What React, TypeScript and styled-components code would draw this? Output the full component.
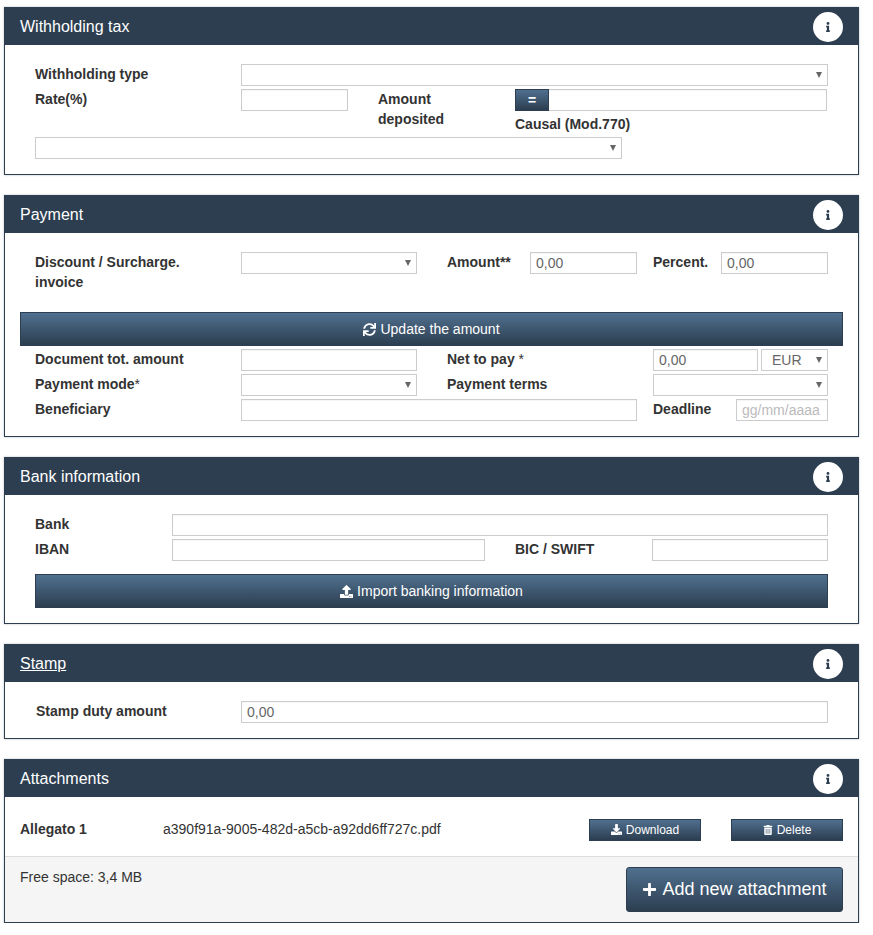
import React from 'react'
import styled, { createGlobalStyle } from 'styled-components'
import { FaDownload, FaInfo, FaPlus, FaSync, FaTrashAlt, FaUpload } from 'react-icons/fa'

const GlobalStyle = createGlobalStyle`
  html, body {
    margin: 0;
    background: #fff;
    font-family: "Liberation Sans", Arial, sans-serif;
    font-size: 14px;
    line-height: 20px;
    color: #333;
  }
`

const Panel: React.FunctionComponent<{ title: string; underline?: boolean; children: React.ReactNode }> = ({
  title,
  underline,
  children,
}) => (
  <PanelBox>
    <PanelHeader>
      <PanelTitle $underline={underline}>{title}</PanelTitle>
      <InfoButton>
        <FaInfo size={10} />
      </InfoButton>
    </PanelHeader>
    {children}
  </PanelBox>
)

const Select: React.FunctionComponent<{ value?: string }> = ({ value }) => (
  <SelectWrap>
    <SelectInput defaultValue={value}>
      {value ? <option>{value}</option> : <option />}
    </SelectInput>
  </SelectWrap>
)

export default function App() {
  return (
    <Page>
      <GlobalStyle />
      <Panel title="Withholding tax">
        <PanelBody>
          <Row $columns="206px 587px">
            <Label>Withholding type</Label>
            <Select />
          </Row>
          <Row $columns="206px 107px 30px 137px 312px">
            <Label>Rate(%)</Label>
            <TextInput />
            <span />
            <Label>Amount deposited</Label>
            <div>
              <InputGroup>
                <GroupButton>=</GroupButton>
                <GroupInput />
              </InputGroup>
              <Causal>Causal (Mod.770)</Causal>
            </div>
          </Row>
          <Row $columns="587px" $overlap={23}>
            <Select />
          </Row>
        </PanelBody>
      </Panel>

      <Panel title="Payment">
        <PanelBody>
          <Row $columns="206px 176px 30px 83px 107px 16px 68px 107px">
            <Label>Discount / Surcharge. invoice</Label>
            <Select />
            <span />
            <Label>Amount**</Label>
            <TextInput defaultValue="0,00" />
            <span />
            <Label>Percent.</Label>
            <TextInput defaultValue="0,00" />
          </Row>
          <WideButton $outset={15} $top={35}>
            <FaSync size={13} /> Update the amount
          </WideButton>
          <Row $columns="206px 176px 30px 206px 105px 3px 67px">
            <Label>Document tot. amount</Label>
            <TextInput />
            <span />
            <Label>Net to pay <Light>*</Light></Label>
            <TextInput defaultValue="0,00" />
            <span />
            <Select value="EUR" />
          </Row>
          <Row $columns="206px 176px 30px 206px 175px">
            <Label>Payment mode<Light>*</Light></Label>
            <Select />
            <span />
            <Label>Payment terms</Label>
            <Select />
          </Row>
          <Row $columns="206px 396px 16px 83px 92px">
            <Label>Beneficiary</Label>
            <TextInput />
            <span />
            <Label>Deadline</Label>
            <TextInput placeholder="gg/mm/aaaa" />
          </Row>
        </PanelBody>
      </Panel>

      <Panel title="Bank information">
        <PanelBody>
          <Row $columns="137px 656px">
            <Label>Bank</Label>
            <TextInput />
          </Row>
          <Row $columns="137px 313px 30px 137px 176px">
            <Label>IBAN</Label>
            <TextInput />
            <span />
            <Label>BIC / SWIFT</Label>
            <TextInput />
          </Row>
          <WideButton $top={10}>
            <FaUpload size={13} /> Import banking information
          </WideButton>
        </PanelBody>
      </Panel>

      <Panel title="Stamp" underline>
        <PanelBody>
          <Row $columns="206px 587px">
            <StampLabel>Stamp duty amount</StampLabel>
            <TextInput defaultValue="0,00" />
          </Row>
        </PanelBody>
      </Panel>

      <Panel title="Attachments">
        <AttachmentRow>
          <AttachmentName>Allegato 1</AttachmentName>
          <FileName>a390f91a-9005-482d-a5cb-a92dd6ff727c.pdf</FileName>
          <SmallButton>
            <FaDownload size={11} /> Download
          </SmallButton>
          <SmallButton>
            <FaTrashAlt size={10} /> Delete
          </SmallButton>
        </AttachmentRow>
        <AttachmentFooter>
          <span>Free space: 3,4 MB</span>
          <AddButton>
            <FaPlus size={15} /> Add new attachment
          </AddButton>
        </AttachmentFooter>
      </Panel>
    </Page>
  )
}

const Page = styled.div`
  display: flex;
  flex-direction: column;
  gap: 20px;
  width: 855px;
  padding: 7px 0 0 4px;
`

const PanelBox = styled.section`
  border: 1px solid #2c3e50;
  box-shadow: 0 0 2px rgba(44, 62, 80, 0.35);
  background: #fff;
`

const PanelHeader = styled.header`
  display: flex;
  align-items: center;
  justify-content: space-between;
  height: 37px;
  padding: 0 15px;
  background: #2c3e50;
`

const PanelTitle = styled.h3<{ $underline?: boolean }>`
  margin: 0;
  font-size: 16px;
  font-weight: 400;
  color: #fff;
  text-decoration: ${({ $underline }) => ($underline ? 'underline' : 'none')};
`

const InfoButton = styled.span`
  display: flex;
  align-items: center;
  justify-content: center;
  width: 30px;
  height: 30px;
  border-radius: 50%;
  background: #fff;
  color: #2c3e50;
`

const PanelBody = styled.div`
  display: flex;
  flex-direction: column;
  gap: 3px;
  padding: 19px 30px 15px;
`

const Row = styled.div<{ $columns: string; $overlap?: number }>`
  display: grid;
  grid-template-columns: ${({ $columns }) => $columns};
  margin-top: ${({ $overlap }) => ($overlap ? `${$overlap}px` : 0)};
  height: 22px;
`

const Label = styled.label`
  padding-right: 30px;
  font-weight: 700;
  color: #333;
`

const StampLabel = styled(Label)`
  padding-left: 1px;
`

const Light = styled.span`
  font-weight: 400;
`

const Causal = styled(Label)`
  display: block;
  margin-top: 3px;
  padding-right: 0;
`

const TextInput = styled.input`
  box-sizing: border-box;
  width: 100%;
  height: 22px;
  padding: 0 5px;
  border: 1px solid #ccc;
  border-radius: 0;
  outline: none;
  background: #fff;
  font: 14px "Liberation Sans", Arial, sans-serif;
  color: #666;
  box-shadow: inset 0 1px 1px rgba(0, 0, 0, 0.04);

  &::placeholder {
    color: #bbb;
    opacity: 1;
  }
`

const SelectWrap = styled.div`
  position: relative;
  height: 22px;

  &::after {
    content: '';
    position: absolute;
    top: 8px;
    right: 6px;
    border-top: 6px solid #666;
    border-left: 3.5px solid transparent;
    border-right: 3.5px solid transparent;
    pointer-events: none;
  }
`

const SelectInput = styled.select`
  box-sizing: border-box;
  display: block;
  width: 100%;
  height: 22px;
  padding: 0 10px;
  border: 1px solid #ccc;
  border-radius: 0;
  outline: none;
  appearance: none;
  background: #fff;
  font: 14px "Liberation Sans", Arial, sans-serif;
  color: #666;
`

const InputGroup = styled.div`
  display: flex;
  height: 22px;
`

const GradientButton = styled.button`
  display: inline-flex;
  align-items: center;
  justify-content: center;
  gap: 4px;
  box-sizing: border-box;
  border: 1px solid #2c3e50;
  border-radius: 0;
  padding: 0;
  background: linear-gradient(to bottom, #50708f, #2c3e50);
  font-family: "Liberation Sans", Arial, sans-serif;
  color: #fff;
`

const GroupButton = styled(GradientButton)`
  flex: 0 0 34px;
  font-size: 14px;
  font-weight: 700;
`

const GroupInput = styled(TextInput)`
  flex: 1;
  border-left: none;
`

const WideButton = styled(GradientButton)<{ $outset?: number; $top: number }>`
  height: 34px;
  margin: ${({ $top, $outset = 0 }) => `${$top}px -${$outset}px 0`};
  font-size: 14px;
`

const AttachmentRow = styled.div`
  display: grid;
  grid-template-columns: 143px 426px 112px 30px 112px;
  grid-template-areas: 'name file down . del';
  align-items: center;
  box-sizing: border-box;
  height: 59px;
  padding: 6px 15px 0;

  & > :nth-child(3) {
    grid-area: down;
  }

  & > :nth-child(4) {
    grid-area: del;
  }
`

const AttachmentName = styled.strong`
  margin-bottom: 2px;
  color: #333;
`

const FileName = styled.span`
  margin-bottom: 2px;
  color: #333;
`

const SmallButton = styled(GradientButton)`
  height: 22px;
  font-size: 12px;
`

const AttachmentFooter = styled.div`
  display: flex;
  align-items: flex-start;
  justify-content: space-between;
  box-sizing: border-box;
  height: 66px;
  padding: 10px 15px;
  border-top: 1px solid #ddd;
  background: #f5f5f5;
`

const AddButton = styled(GradientButton)`
  gap: 5px;
  width: 217px;
  height: 45px;
  border-radius: 3px;
  font-size: 18px;
`
